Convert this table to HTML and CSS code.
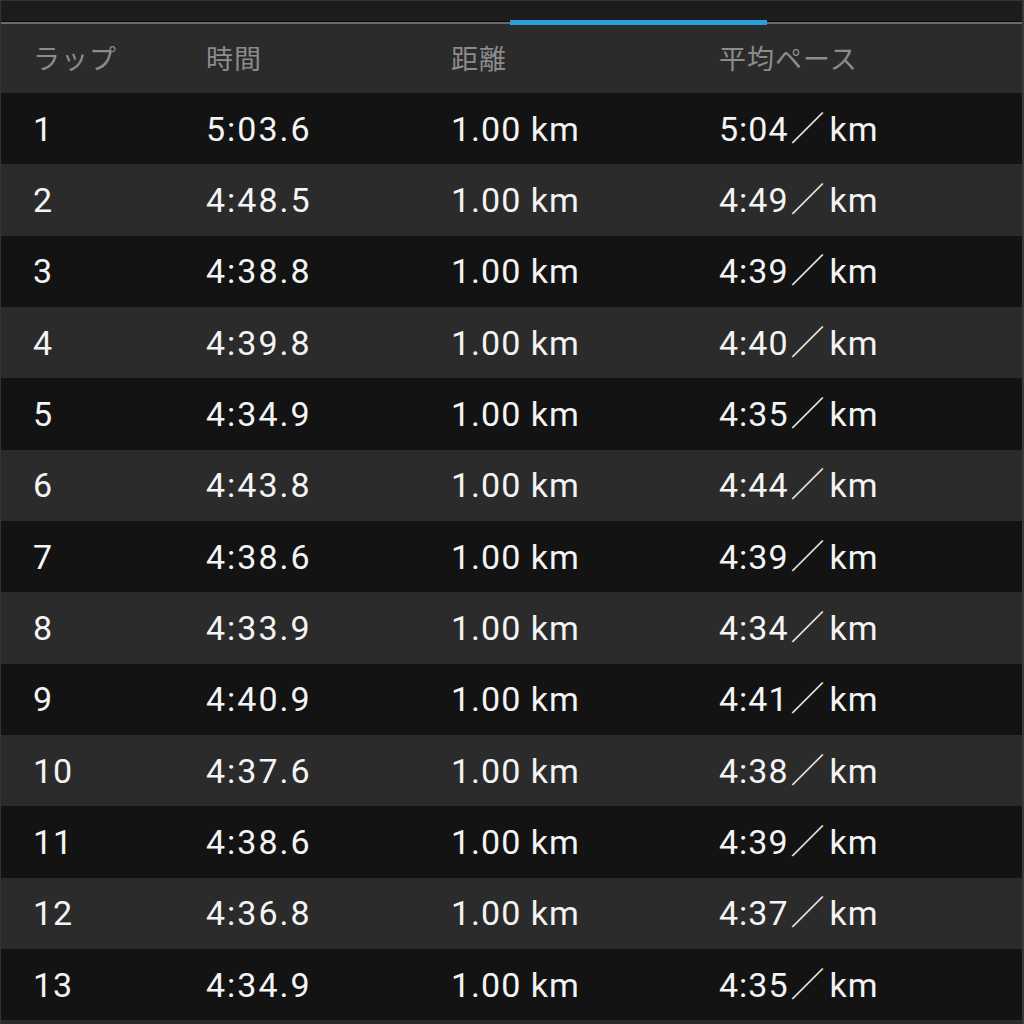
FILE: index.html
```html
<!DOCTYPE html>
<html lang="ja">
<head>
<meta charset="utf-8">
<link rel="stylesheet" href="styles.css">
</head>
<body>
<div class="screen">
  <div class="tabbar"><div class="indicator"></div></div>
  <div class="table">
    <div class="row head"><span>ラップ</span><span>時間</span><span>距離</span><span>平均ペース</span></div>
    <div class="row"><span>1</span><span class="t">5:03.6</span><span>1.00 km</span><span>5:04<i>／</i>km</span></div>
    <div class="row"><span>2</span><span class="t">4:48.5</span><span>1.00 km</span><span>4:49<i>／</i>km</span></div>
    <div class="row"><span>3</span><span class="t">4:38.8</span><span>1.00 km</span><span>4:39<i>／</i>km</span></div>
    <div class="row"><span>4</span><span class="t">4:39.8</span><span>1.00 km</span><span>4:40<i>／</i>km</span></div>
    <div class="row"><span>5</span><span class="t">4:34.9</span><span>1.00 km</span><span>4:35<i>／</i>km</span></div>
    <div class="row"><span>6</span><span class="t">4:43.8</span><span>1.00 km</span><span>4:44<i>／</i>km</span></div>
    <div class="row"><span>7</span><span class="t">4:38.6</span><span>1.00 km</span><span>4:39<i>／</i>km</span></div>
    <div class="row"><span>8</span><span class="t">4:33.9</span><span>1.00 km</span><span>4:34<i>／</i>km</span></div>
    <div class="row"><span>9</span><span class="t">4:40.9</span><span>1.00 km</span><span>4:41<i>／</i>km</span></div>
    <div class="row"><span>10</span><span class="t">4:37.6</span><span>1.00 km</span><span>4:38<i>／</i>km</span></div>
    <div class="row"><span>11</span><span class="t">4:38.6</span><span>1.00 km</span><span>4:39<i>／</i>km</span></div>
    <div class="row"><span>12</span><span class="t">4:36.8</span><span>1.00 km</span><span>4:37<i>／</i>km</span></div>
    <div class="row"><span>13</span><span class="t">4:34.9</span><span>1.00 km</span><span>4:35<i>／</i>km</span></div>
  </div>
</div>
</body>
</html>
```
FILE: styles.css
```css
html, body {
  margin: 0;
  padding: 0;
  background: #2a2a2a;
}
.screen {
  width: 1024px;
  height: 1024px;
  overflow: hidden;
  background: #2a2a2a;
  box-sizing: border-box;
  border-right: 2px solid #3a3a3a;
  border-left: 1px solid #333;
}
.tabbar {
  height: 22px;
  background: #1c1c1c;
  border-top: 1px solid #333;
  border-bottom: 1px solid #0a0a0a;
  box-sizing: border-box;
  position: relative;
}
.indicator {
  position: absolute;
  left: 509px;
  width: 257px;
  top: 19px;
  height: 5px;
  background: #2b9fd9;
  z-index: 2;
}
.table {
  border-top: 2px solid #6a6a6a;
}
.row {
  display: grid;
  grid-template-columns: 173px 245px 268px 1fr;
  align-items: center;
  height: 71.33px;
  padding-left: 32px;
  background: #2b2b2b;
  color: #f4f4f4;
  font-family: "Roboto", "Noto Sans CJK JP", sans-serif;
  font-size: 34px;
  line-height: 40px;
  letter-spacing: 1px;
}
.row .t {
  letter-spacing: 2px;
}
.row:nth-child(even) {
  background: #131313;
}
.row.head {
  height: 69px;
  color: #8c8c8c;
  font-family: "Noto Sans CJK JP", sans-serif;
  font-size: 27px;
  letter-spacing: 1px;
  padding-bottom: 2px;
  box-sizing: border-box;
}
.row i {
  font-style: normal;
  font-family: "Noto Sans CJK JP", sans-serif;
  font-weight: 300;
  letter-spacing: 0;
  line-height: 0;
  margin: 0 5px 0 2px;
}
```
